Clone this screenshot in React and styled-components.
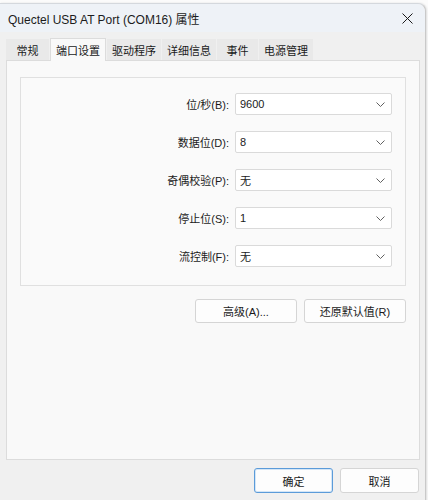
import React from "react";
import styled, { createGlobalStyle, css } from "styled-components";

const GlobalStyle = createGlobalStyle`
  html, body {
    margin: 0;
    padding: 0;
    background: #fbfbfb;
  }
  body {
    font-family: "Liberation Sans", "Noto Sans CJK SC", sans-serif;
    font-size: 11px;
    color: #1a1a1a;
  }
`;

const Screen = styled.div`
  width: 428px;
  height: 500px;
  overflow: hidden;
  padding-top: 3px;
  box-sizing: border-box;
`;

const Window = styled.div`
  width: 426px;
  height: 520px;
  background: #f0f0f0;
  border-top: 1px solid #d4d8dd;
  border-right: 1px solid #c9c9c9;
  border-top-right-radius: 8px;
  box-shadow: 1px 0 2px rgba(0, 0, 0, 0.12);
  display: flex;
  flex-direction: column;
  box-sizing: border-box;
`;

const TitleBar = styled.div`
  height: 28px;
  display: flex;
  align-items: center;
  justify-content: space-between;
  padding: 0 10px 0 8px;
  background: #eef2f7;
  border-top-right-radius: 8px;
`;

const Title = styled.span`
  font-size: 12px;
  color: #1c1c1c;
`;

const CloseIcon = styled.svg`
  width: 11px;
  height: 11px;
  margin-right: 2px;
`;

const Body = styled.div`
  flex: 1;
  display: flex;
  flex-direction: column;
  padding: 6px 6px 0 6px;
`;

const TabStrip = styled.div`
  display: flex;
  align-items: flex-end;
  gap: 1px;
  height: 22px;
  position: relative;
  z-index: 1;
`;

const Tab = styled.div`
  height: 21px;
  min-width: ${p => p.$min || 41}px;
  padding: 0 5px;
  box-sizing: border-box;
  display: flex;
  align-items: center;
  justify-content: center;
  background: #e9e9e9;
  color: #1a1a1a;
  ${p =>
    p.$active &&
    css`
      height: 23px;
      margin-bottom: -1px;
      background: #f9f9f9;
      border: 1px solid #dcdcdc;
      border-bottom: none;
    `}
`;

const Panel = styled.div`
  width: 414px;
  height: 400px;
  box-sizing: border-box;
  background: #f9f9f9;
  border: 1px solid #dcdcdc;
  padding: 16px 13px 0 13px;
`;

const Group = styled.div`
  border: 1px solid #e0e0e0;
  background: #fafafa;
  padding: 15px 13px 18px 0;
  display: flex;
  flex-direction: column;
  gap: 16px;
`;

const Row = styled.div`
  display: flex;
  align-items: center;
  justify-content: flex-end;
  gap: 6px;
`;

const Label = styled.label`
  color: #1a1a1a;
`;

const Select = styled.div`
  width: 157px;
  height: 22px;
  box-sizing: border-box;
  background: #ffffff;
  border: 1px solid #dadada;
  border-radius: 2px;
  display: flex;
  align-items: center;
  justify-content: space-between;
  padding: 0 6px 0 4px;
`;

const Chevron = styled.svg`
  width: 9px;
  height: 5px;
`;

const ButtonRow = styled.div`
  display: flex;
  justify-content: flex-end;
  gap: ${p => p.$gap || 7}px;
  margin-top: ${p => p.$top || 0}px;
  padding-right: ${p => p.$right || 0}px;
`;

const Button = styled.button`
  width: ${p => p.$w || 102}px;
  height: ${p => p.$h || 24}px;
  font-family: inherit;
  font-size: 11px;
  color: #1a1a1a;
  background: #fdfdfd;
  border: 1px solid #d5d5d5;
  border-radius: 3px;
  padding: 0;
  ${p =>
    p.$primary &&
    css`
      border-color: #5b9bd9;
      box-shadow: inset 0 0 0 1px #d4e6f7;
    `}
`;

const fields = [
  ["位/秒(B):", "9600"],
  ["数据位(D):", "8"],
  ["奇偶校验(P):", "无"],
  ["停止位(S):", "1"],
  ["流控制(F):", "无"],
];

const tabs = [
  ["常规", 43],
  ["端口设置", 56],
  ["驱动程序", 51],
  ["详细信息", 52],
  ["事件", 41],
  ["电源管理", 53],
];

export default function App() {
  return (
    <Screen>
      <GlobalStyle />
      <Window>
        <TitleBar>
          <Title>Quectel USB AT Port (COM16) 属性</Title>
          <CloseIcon viewBox="0 0 11 11">
            <path d="M0.5 0.5 L10.5 10.5 M10.5 0.5 L0.5 10.5" stroke="#1a1a1a" strokeWidth="1" />
          </CloseIcon>
        </TitleBar>
        <Body>
          <TabStrip>
            {tabs.map(([name, w], i) => (
              <Tab key={name} $min={w} $active={i === 1}>
                {name}
              </Tab>
            ))}
          </TabStrip>
          <Panel>
            <Group>
              {fields.map(([label, value]) => (
                <Row key={label}>
                  <Label>{label}</Label>
                  <Select>
                    <span>{value}</span>
                    <Chevron viewBox="0 0 9 5">
                      <path d="M0.5 0.5 L4.5 4.5 L8.5 0.5" fill="none" stroke="#606060" strokeWidth="1" />
                    </Chevron>
                  </Select>
                </Row>
              ))}
            </Group>
            <ButtonRow $top={13}>
              <Button>高级(A)...</Button>
              <Button>还原默认值(R)</Button>
            </ButtonRow>
          </Panel>
          <ButtonRow $top={8} $gap={7} $right={0}>
            <Button $w={79} $h={25} $primary>
              确定
            </Button>
            <Button $w={79} $h={25}>
              取消
            </Button>
          </ButtonRow>
        </Body>
      </Window>
    </Screen>
  );
}
